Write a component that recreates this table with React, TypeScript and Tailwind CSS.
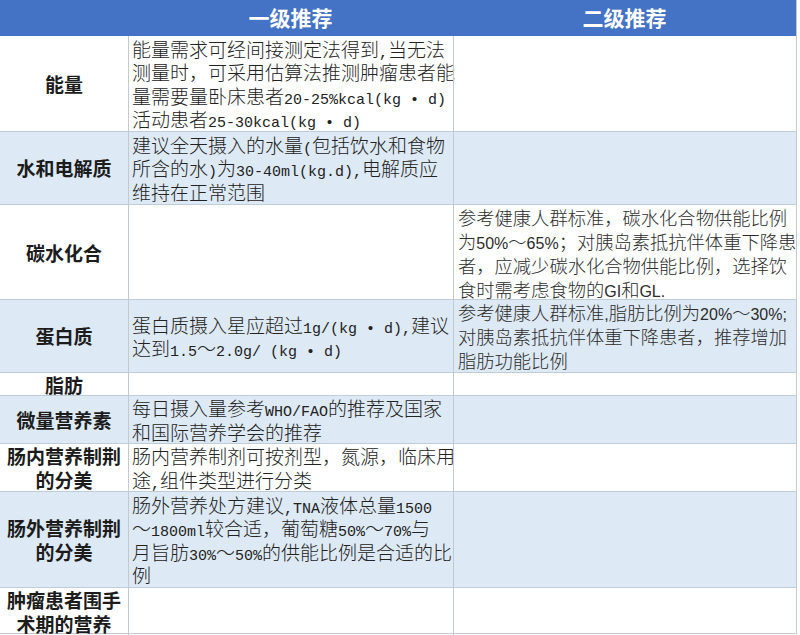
import React from 'react';

const ASCII_SPLIT = /([\x20-\x7E•]+)/;
const IS_ASCII = /^[\x20-\x7E•]/;

function MonoMix({ text }: { text: string }) {
  const parts = text.split(ASCII_SPLIT).filter((p) => p.length > 0);
  return (
    <>
      {parts.map((p, i) =>
        IS_ASCII.test(p) ? (
          <span key={i} className="font-['Liberation_Mono',monospace] text-[15px] leading-none">
            {p}
          </span>
        ) : (
          <React.Fragment key={i}>{p}</React.Fragment>
        )
      )}
    </>
  );
}

function SansMix({ text }: { text: string }) {
  const parts = text.split(ASCII_SPLIT).filter((p) => p.length > 0);
  return (
    <>
      {parts.map((p, i) =>
        IS_ASCII.test(p) ? (
          <span key={i} className="font-['Liberation_Sans',sans-serif] text-[16px] leading-none">
            {p}
          </span>
        ) : (
          <React.Fragment key={i}>{p}</React.Fragment>
        )
      )}
    </>
  );
}

type Row = {
  h: string;
  blue: boolean;
  label: string[];
  c2: string[];
  c3: string[];
};

const rows: Row[] = [
  {
    h: 'h-[95px]',
    blue: false,
    label: ['能量'],
    c2: [
      '能量需求可经间接测定法得到,当无法',
      '测量时，可采用估算法推测肿瘤患者能',
      '量需要量卧床患者20-25%kcal(kg • d)',
      '活动患者25-30kcal(kg • d)',
    ],
    c3: [],
  },
  {
    h: 'h-[73px]',
    blue: true,
    label: ['水和电解质'],
    c2: ['建议全天摄入的水量(包括饮水和食物', '所含的水)为30-40ml(kg.d),电解质应', '维持在正常范围'],
    c3: [],
  },
  {
    h: 'h-[95px]',
    blue: false,
    label: ['碳水化合'],
    c2: [],
    c3: [
      '参考健康人群标准，碳水化合物供能比例',
      '为50%～65%；对胰岛素抵抗伴体重下降患',
      '者，应减少碳水化合物供能比例，选择饮',
      '食时需考虑食物的GI和GL.',
    ],
  },
  {
    h: 'h-[73px]',
    blue: true,
    label: ['蛋白质'],
    c2: ['蛋白质摄入星应超过1g/(kg • d),建议', '达到1.5～2.0g/ (kg • d)'],
    c3: ['参考健康人群标准,脂肪比例为20%～30%;', '对胰岛素抵抗伴体重下降患者，推荐增加', '脂肪功能比例'],
  },
  {
    h: 'h-[23px]',
    blue: false,
    label: ['脂肪'],
    c2: [],
    c3: [],
  },
  {
    h: 'h-[48px]',
    blue: true,
    label: ['微量营养素'],
    c2: ['每日摄入量参考WHO/FAO的推荐及国家', '和国际营养学会的推荐'],
    c3: [],
  },
  {
    h: 'h-[48px]',
    blue: false,
    label: ['肠内营养制荆', '的分美'],
    c2: ['肠内营养制剂可按剂型，氮源，临床用', '途,组件类型进行分类'],
    c3: [],
  },
  {
    h: 'h-[96px]',
    blue: true,
    label: ['肠外营养制荆', '的分美'],
    c2: [
      '肠外营养处方建议,TNA液体总量1500',
      '～1800ml较合适，葡萄糖50%～70%与',
      '月旨肪30%～50%的供能比例是合适的比',
      '例',
    ],
    c3: [],
  },
  {
    h: 'h-[47px]',
    blue: false,
    label: ['肿瘤患者围手', '术期的营养'],
    c2: [],
    c3: [],
  },
];

export default function App() {
  return (
    <div className="w-[800px] h-[635px] overflow-hidden bg-white font-['Noto_Sans_CJK_SC',sans-serif]">
      <div className="w-[797px] border-r border-[#c3c9cf]">
        {/* Header */}
        <div className="grid grid-cols-[128px_325px_1fr] h-[36px] bg-[#4472c4] text-white font-bold text-[21px] leading-[34px]">
          <div />
          <div className="text-center">一级推荐</div>
          <div className="text-center">二级推荐</div>
        </div>
        {rows.map((r, idx) => (
          <div
            key={idx}
            className={`grid grid-cols-[128px_325px_1fr] ${r.h} ${
              r.blue ? 'bg-[#dde9f5]' : 'bg-white'
            } ${idx > 0 ? 'border-t border-[#bfcddb]' : ''} ${
              idx === rows.length - 1 ? 'border-b border-[#8ea3b6]' : ''
            }`}
          >
            <div className="flex flex-col items-center justify-center text-center font-bold text-[19px] text-[#1c1c1c] overflow-visible">
              {r.label.map((l, i) => (
                <div key={i} className="whitespace-nowrap h-[23.5px] leading-[23.5px] shrink-0">
                  {l}
                </div>
              ))}
            </div>
            <div className="border-l border-[#c3c9cf] flex flex-col justify-center pl-[3px] text-[19px] font-light text-[#222]">
              {r.c2.map((l, i) => (
                <div key={i} className="whitespace-nowrap h-[23.5px] leading-[23.5px] shrink-0">
                  <MonoMix text={l} />
                </div>
              ))}
            </div>
            <div className="border-l border-[#c3c9cf] flex flex-col justify-center pl-[4px] text-[18.3px] font-light text-[#2c2c2c]">
              {r.c3.map((l, i) => (
                <div key={i} className="whitespace-nowrap h-[24px] leading-[24px] shrink-0">
                  <SansMix text={l} />
                </div>
              ))}
            </div>
          </div>
        ))}
      </div>
    </div>
  );
}
